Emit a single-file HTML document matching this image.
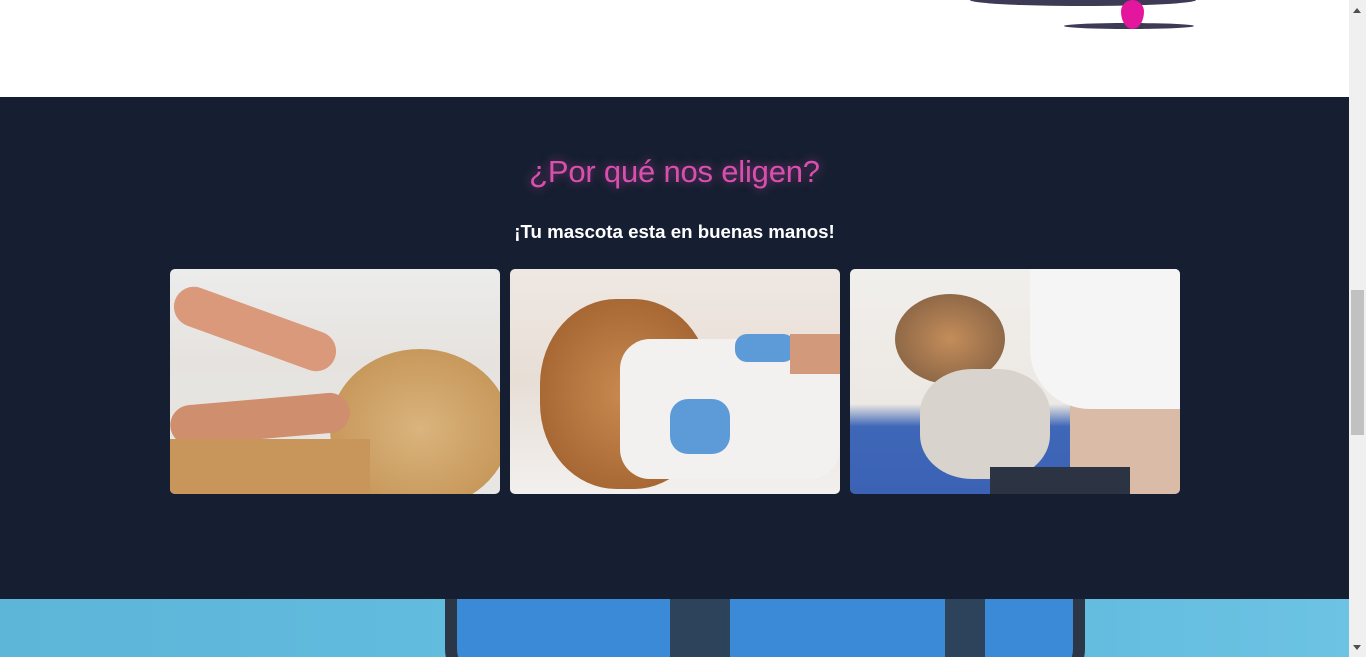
<!DOCTYPE html>
<html><head><meta charset="utf-8"><style>
*{margin:0;padding:0;box-sizing:border-box}
body{width:1366px;height:657px;overflow:hidden;background:#fff;font-family:"Liberation Sans",sans-serif;position:relative}
.top{position:absolute;left:0;top:0;width:1349px;height:97px;background:#fff}
.dark{position:absolute;left:0;top:97px;width:1349px;height:502px;background:#161f31}
.bottom{position:absolute;left:0;top:599px;width:1349px;height:58px;background:linear-gradient(90deg,#5db5d8,#62bde0 40%,#5fb8dd 70%,#6cc3e3);overflow:hidden}
.sb{position:absolute;right:0;top:0;width:17px;height:657px;background:#f0f0f0}
.thumb{position:absolute;right:2px;top:290px;width:13px;height:145px;background:#c1c1c1}
h2{position:absolute;left:0;top:154px;width:1349px;text-align:center;color:#d94fae;font-size:31px;letter-spacing:-0.2px;font-weight:normal;text-shadow:0 0 10px rgba(217,79,174,.55)}
h3{position:absolute;left:0;top:221px;width:1349px;text-align:center;color:#fff;font-size:18.7px;font-weight:bold}
.card{position:absolute;top:269px;width:330px;height:225px;border-radius:5px;overflow:hidden}
</style></head><body>
<div class="top">
<div style="position:absolute;left:970px;top:-6px;width:226px;height:12px;border-radius:50%;background:#3d3a55"></div>
<div style="position:absolute;left:1064px;top:23px;width:130px;height:6px;border-radius:50%;background:#3d3a55"></div>
<div style="position:absolute;left:1121px;top:0;width:23px;height:29px;background:#e4169e;border-radius:50% 50% 50% 50%/40% 40% 60% 60%"></div>
</div>
<div class="dark"></div>
<h2>¿Por qué nos eligen?</h2>
<h3>¡Tu mascota esta en buenas manos!</h3>
<div class="card" style="left:170px;background:linear-gradient(180deg,#ececec 0%,#e6e3df 40%,#e8e6e3 100%)">
<div style="position:absolute;left:160px;top:80px;width:180px;height:160px;border-radius:50%;background:radial-gradient(#d9b47d,#c18d4e)"></div>
<div style="position:absolute;left:0;top:40px;width:170px;height:40px;background:#d9997a;transform:rotate(20deg);border-radius:20px"></div>
<div style="position:absolute;left:0;top:130px;width:180px;height:40px;background:#cf8e6e;border-radius:20px;transform:rotate(-5deg)"></div>
<div style="position:absolute;left:0;top:170px;width:200px;height:60px;background:#c8955a"></div>
</div>
<div class="card" style="left:510px;background:linear-gradient(180deg,#efe8e2 0%,#e7ded6 50%,#f2f0ee 100%)">
<div style="position:absolute;left:30px;top:30px;width:170px;height:190px;border-radius:45%;background:radial-gradient(#c98a50,#9a5b2a)"></div>
<div style="position:absolute;left:110px;top:70px;width:220px;height:140px;border-radius:30px;background:#f3f1f0"></div>
<div style="position:absolute;left:225px;top:65px;width:60px;height:28px;border-radius:12px;background:#5d9ad8"></div>
<div style="position:absolute;left:160px;top:130px;width:60px;height:55px;border-radius:18px;background:#5d9ad8"></div>
<div style="position:absolute;left:280px;top:65px;width:50px;height:40px;background:#d29a7a"></div>
</div>
<div class="card" style="left:850px;background:linear-gradient(180deg,#f1efec 0%,#ece8e3 60%,#3f67b8 70%,#3b62b4 100%)">
<div style="position:absolute;left:220px;top:0;width:110px;height:225px;background:#d9bba8"></div>
<div style="position:absolute;left:180px;top:0;width:150px;height:140px;background:#f5f5f5;border-radius:0 0 0 60px"></div>
<div style="position:absolute;left:45px;top:25px;width:110px;height:90px;border-radius:50%;background:radial-gradient(#c48d5a,#7a5a40)"></div>
<div style="position:absolute;left:70px;top:100px;width:130px;height:110px;border-radius:40%;background:#d8d3cc"></div>
<div style="position:absolute;left:140px;top:198px;width:140px;height:27px;background:#2c3342"></div>
</div>
<div class="bottom">
<div style="position:absolute;left:445px;top:0;width:640px;height:90px;border:12px solid #2b3646;border-top:none;border-radius:0 0 40px 40px;background:#3a8ad8"></div>
<div style="position:absolute;left:670px;top:0;width:60px;height:58px;background:#2b3646;opacity:.85"></div>
<div style="position:absolute;left:945px;top:0;width:40px;height:58px;background:#2b3646;opacity:.85"></div>
</div>
<div class="sb"><div class="thumb"></div>
<div style="position:absolute;left:4px;top:8px;border:4px solid transparent;border-bottom:5px solid #505050;border-top:0"></div>
<div style="position:absolute;left:4px;top:645px;border:4px solid transparent;border-top:5px solid #505050;border-bottom:0"></div>
</div>
</body></html>
